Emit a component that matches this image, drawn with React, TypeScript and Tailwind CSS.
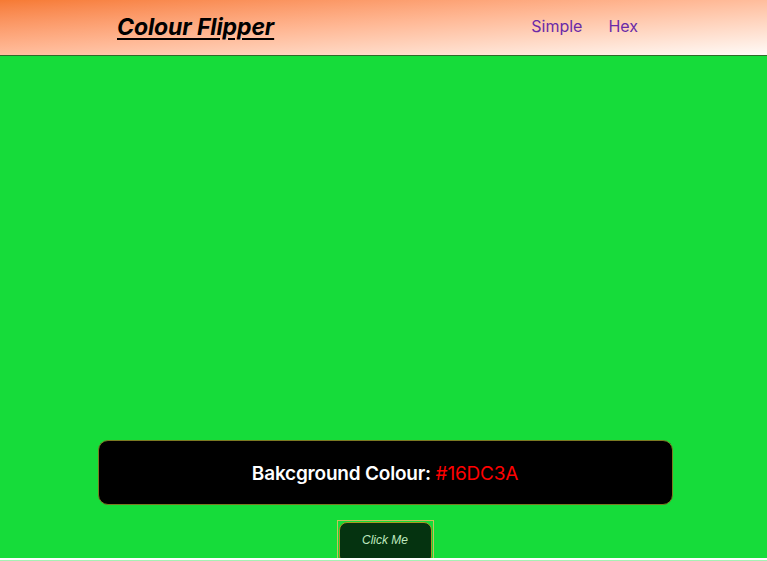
const BG = "#16DC3A";

export default function App() {
  return (
    <div className="flex h-[561px] w-full flex-col overflow-hidden bg-white font-['Inter',sans-serif]">
      <header className="flex h-[56px] shrink-0 items-center border-b border-[#2f6b2a] bg-linear-to-br from-[#f67a33] to-[#fffbf8]">
        <h1 className="ml-[117px] text-[23px] font-bold italic leading-none tracking-[-0.1px] text-black underline decoration-2 underline-offset-[3px]">
          Colour Flipper
        </h1>
        <nav className="ml-auto mr-[129px] -mt-[4px] flex items-center gap-[26px] text-[16px] text-[#6a2aa8]">
          <a href="#">Simple</a>
          <a href="#">Hex</a>
        </nav>
      </header>

      <main className="flex h-[502px] shrink-0 flex-col items-center justify-end overflow-hidden pl-[3px]" style={{ backgroundColor: BG }}>
        <div className="mb-[15px] flex h-[65px] w-[575px] shrink-0 items-center justify-center rounded-[10px] border border-[#7a7a22] bg-black pt-[3px]">
          <h2 className="text-[19px] font-semibold tracking-[-0.2px] text-white">
            Bakcground Colour: <span className="font-normal text-[#ff0000]">#16DC3A</span>
          </h2>
        </div>
        <div className="-mb-[8px] shrink-0 border border-[#c9c05a] p-px">
          <button className="flex h-[42px] w-[93px] items-center justify-center rounded-[8px] border border-[#a89a20] bg-[#053310] pb-[6px] font-['Liberation_Sans',Arial,sans-serif] text-[12px] italic text-[#bfe8bf]">
            Click Me
          </button>
        </div>
      </main>
      <div className="h-[2px] shrink-0 bg-white" />
      <div className="flex-1 bg-[#a6f0b4]" />
    </div>
  );
}
